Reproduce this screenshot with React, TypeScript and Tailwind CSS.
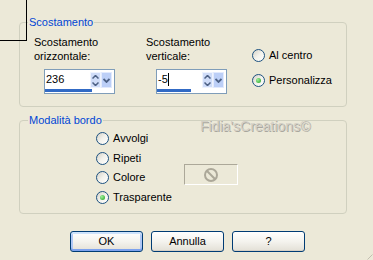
import React from 'react';

const Radio: React.FC<{ label: string; checked?: boolean }> = ({ label, checked }) => (
  <div className="flex items-center gap-[4px] h-[13px]">
    <span className="w-[13px] h-[13px] shrink-0 rounded-full border border-[#1c5180] bg-gradient-to-br from-[#d4d1c7] via-[#f3f2ec] to-white flex items-center justify-center">
      {checked && (
        <span className="w-[5px] h-[5px] rounded-full bg-[radial-gradient(circle_at_35%_35%,#9ef09a,#1f9e1f)]" />
      )}
    </span>
    <span className="leading-[13px] whitespace-nowrap">{label}</span>
  </div>
);

const SpinBox: React.FC<{ value: string; bar: number; caret?: boolean }> = ({ value, bar, caret }) => (
  <div className="w-[71px] h-[25px] border border-[#7f9db9] bg-white flex flex-col">
    <div className="flex h-[19px]">
      <div className="flex-1 pl-[1px] pt-[3px] leading-[13px] flex items-start">
        <span>{value}</span>
        {caret && <span className="w-px h-[13px] bg-black" />}
      </div>
      <div className="mt-[2px] w-[11px] h-[16px] bg-[#cfdcf8] border border-[#eef3fe] flex flex-col items-center justify-center gap-[3px]">
        <svg width="7" height="4" viewBox="0 0 7 4">
          <path d="M0.5 3.5 L3.5 0.5 L6.5 3.5" fill="none" stroke="#4d6185" strokeWidth="1.5" />
        </svg>
        <svg width="7" height="4" viewBox="0 0 7 4">
          <path d="M0.5 0.5 L3.5 3.5 L6.5 0.5" fill="none" stroke="#4d6185" strokeWidth="1.5" />
        </svg>
      </div>
      <div className="mt-[2px] mr-[2px] w-[11px] h-[16px] bg-[#bccff7] border border-[#e2eafd] flex items-center justify-center">
        <svg width="7" height="5" viewBox="0 0 7 5">
          <path d="M0.5 1 L3.5 4 L6.5 1" fill="none" stroke="#4d6185" strokeWidth="1.8" />
        </svg>
      </div>
    </div>
    <div className="h-[3px] bg-[#316ac5]" style={{ width: bar }} />
  </div>
);

const Button: React.FC<{ label: string; primary?: boolean }> = ({ label, primary }) => (
  <button
    className={
      primary
        ? 'w-[73px] h-[21px] rounded-[3px] border border-[#003c74] bg-gradient-to-b from-white via-[#f4f3ee] to-[#e3e0d6] shadow-[inset_0_2px_0_#cee3fc,inset_0_-2px_0_#7da2ee,inset_2px_0_0_#b0c8f5,inset_-2px_0_0_#b0c8f5] leading-[19px] text-black'
        : 'w-[73px] h-[21px] rounded-[3px] border border-[#003c74] bg-gradient-to-b from-white via-[#f4f3ee] to-[#e3e0d6] shadow-[inset_0_-1px_0_#d6d0c5] leading-[19px] text-black'
    }
  >
    {label}
  </button>
);

export default function App() {
  return (
    <div className="relative w-[373px] h-[260px] overflow-hidden bg-[#ece9d8] pt-[16px] font-['Liberation_Sans',Arial,sans-serif] text-[11px] text-black">
      <fieldset className="ml-[19px] w-[328px] h-[91px] border border-[#d0d0bf] rounded-[4px]">
        <legend className="ml-[8px] px-[1px] leading-[13px] text-[#0046d5]">Scostamento</legend>
        <div className="flex pt-[6px]">
          <div className="pl-[14px] w-[126px]">
            <div className="leading-[14px]">
              Scostamento
              <br />
              orizzontale:
            </div>
            <div className="mt-[6px] ml-[10px]">
              <SpinBox value="236" bar={47} />
            </div>
          </div>
          <div className="w-[106px]">
            <div className="leading-[14px]">
              Scostamento
              <br />
              verticale:
            </div>
            <div className="mt-[6px] ml-[10px]">
              <SpinBox value="-5" bar={34} caret />
            </div>
          </div>
          <div className="mt-[14px] flex flex-col gap-[12px]">
            <Radio label="Al centro" />
            <Radio label="Personalizza" checked />
          </div>
        </div>
      </fieldset>

      <fieldset className="mt-[7px] ml-[19px] w-[328px] h-[100px] border border-[#d0d0bf] rounded-[4px]">
        <legend className="ml-[8px] px-[1px] leading-[13px] text-[#0046d5]">Modalità bordo</legend>
        <div className="flex pt-[5px] pl-[76px]">
          <div className="w-[88px] flex flex-col gap-[6.5px]">
            <Radio label="Avvolgi" />
            <Radio label="Ripeti" />
            <Radio label="Colore" />
            <Radio label="Trasparente" checked />
          </div>
          <div className="mt-[32px] w-[54px] h-[21px] border border-t-[#aca899] border-l-[#aca899] border-b-white border-r-white flex items-center justify-center">
            <svg width="16" height="16" viewBox="0 0 16 16">
              <circle cx="8" cy="8" r="6" fill="none" stroke="#aca899" strokeWidth="2" />
              <path d="M3.8 3.8 L12.2 12.2" stroke="#aca899" strokeWidth="2" />
            </svg>
          </div>
        </div>
      </fieldset>

      <div className="mt-[17px] pl-[70px] flex gap-[8px]">
        <Button label="OK" primary />
        <Button label="Annulla" />
        <Button label="?" />
      </div>

      {/* edge of the window behind */}
      <div className="absolute left-0 top-0 w-[27px] h-[41px] border-r border-b border-black" />

      {/* watermark */}
      <div className="absolute left-[200px] top-[118px] text-[14px] leading-[16px] text-[#d3d0c7] [text-shadow:1px_1px_0_#a9a69d]">
        Fidia'sCreations©
      </div>

      <svg className="absolute right-0 bottom-0" width="6" height="6" viewBox="0 0 6 6">
        <path d="M5.5 0.5 L0.5 5.5" stroke="#c3bfb1" strokeWidth="1" />
      </svg>
    </div>
  );
}
